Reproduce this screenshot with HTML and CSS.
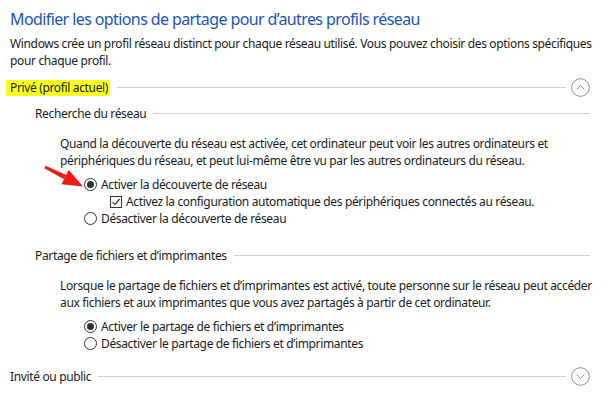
FILE: index.html
```html
<!DOCTYPE html>
<html lang="fr">
<head>
  <meta charset="UTF-8">
  <title>Paramètres de partage avancés</title>
  <link rel="stylesheet" href="styles.css">
</head>
<body>
  <h1 class="page-title">Modifier les options de partage pour d’autres profils réseau</h1>
  <p class="intro">Windows crée un profil réseau distinct pour chaque réseau utilisé. Vous pouvez choisir des options spécifiques pour chaque profil.</p>

  <section class="profile">
    <div class="profile-head">
      <span class="profile-name marked">Privé (profil actuel)</span>
      <span class="rule"></span>
      <svg class="toggle" viewBox="0 0 19 19"><circle cx="9.5" cy="9.5" r="8.8"/><path d="M5.8 11.2 9.5 7.6 13.2 11.2"/></svg>
    </div>

    <div class="group">
      <div class="group-head"><span>Recherche du réseau</span><span class="rule"></span></div>
      <p class="group-text">Quand la découverte du réseau est activée, cet ordinateur peut voir les autres ordinateurs et périphériques du réseau, et peut lui-même être vu par les autres ordinateurs du réseau.</p>
      <div class="options">
        <label class="option"><span class="radio on"></span>Activer la découverte de réseau</label>
        <label class="option sub"><span class="check"><svg viewBox="0 0 10 10"><path d="M1.6 5.2 4 7.6 8.6 2"/></svg></span>Activez la configuration automatique des périphériques connectés au réseau.</label>
        <label class="option"><span class="radio"></span>Désactiver la découverte de réseau</label>
      </div>
    </div>

    <div class="group">
      <div class="group-head"><span>Partage de fichiers et d’imprimantes</span><span class="rule"></span></div>
      <p class="group-text">Lorsque le partage de fichiers et d’imprimantes est activé, toute personne sur le réseau peut accéder aux fichiers et aux imprimantes que vous avez partagés à partir de cet ordinateur.</p>
      <div class="options">
        <label class="option"><span class="radio on"></span>Activer le partage de fichiers et d’imprimantes</label>
        <label class="option"><span class="radio"></span>Désactiver le partage de fichiers et d’imprimantes</label>
      </div>
    </div>
  </section>

  <section class="profile">
    <div class="profile-head">
      <span class="profile-name">Invité ou public</span>
      <span class="rule"></span>
      <svg class="toggle" viewBox="0 0 19 19"><circle cx="9.5" cy="9.5" r="8.8"/><path d="M5.8 7.8 9.5 11.4 13.2 7.8"/></svg>
    </div>
  </section>

  <!-- annotation -->
  <svg class="pointer" viewBox="40 160 50 32">
    <polygon points="45.7,165.7 44.3,168.3 64,179.3 66.2,174.9"/>
    <polygon points="83,186.5 61.5,184.3 68.7,169.9"/>
  </svg>
</body>
</html>
```

FILE: styles.css
```css
body {
  margin: 0;
  padding: 8px 13px 0 10px;
  position: relative;
  font-family: "Segoe UI", "Noto Sans", sans-serif;
  font-size: 12px;
  line-height: 17px;
  letter-spacing: -0.35px;
  color: #1a1a1a;
  background: #fff;
}
.page-title {
  margin: 0;
  font-size: 16px;
  font-weight: normal;
  line-height: 22px;
  letter-spacing: -0.6px;
  color: #1c54b4;
}
.intro {
  margin: 5px -6px 0 0;
}
.profile-head {
  display: flex;
  align-items: center;
  height: 19px;
  margin-top: 9px;
}
.profile-name.marked {
  background: #f8ff1c;
  margin-left: -4px;
  padding: 0 2px 0 4px;
  line-height: 16px;
}
.rule {
  flex: 1;
  height: 1px;
  margin-left: 7px;
  background: #cfcfcf;
}
.toggle {
  width: 19px;
  height: 19px;
  margin-left: 5px;
  fill: none;
  stroke: #8c8c8c;
  stroke-width: 1;
}
.group {
  padding-left: 25px;
}
.group-head {
  display: flex;
  align-items: center;
  margin-top: 8px;
}
.group + .group .group-head {
  margin-top: 20px;
}
.group-text {
  margin: 13px -6px 0 25px;
}
.options {
  margin: 7px 0 0 49px;
}
.option {
  display: flex;
  align-items: center;
  height: 17px;
}
.option.sub {
  margin-left: 26px;
}
.radio {
  width: 13px;
  height: 13px;
  box-sizing: border-box;
  margin-right: 4px;
  border: 1px solid #333;
  border-radius: 50%;
  display: flex;
  align-items: center;
  justify-content: center;
}
.radio.on::after {
  content: "";
  width: 7px;
  height: 7px;
  border-radius: 50%;
  background: #333;
}
.check {
  width: 12px;
  height: 12px;
  box-sizing: border-box;
  margin-right: 4px;
  border: 1px solid #333;
  display: flex;
}
.check svg {
  width: 10px;
  height: 10px;
  fill: none;
  stroke: #333;
  stroke-width: 1.2;
}
.profile + .profile .profile-head {
  margin-top: 15px;
}
.pointer {
  position: absolute;
  left: 40px;
  top: 160px;
  width: 50px;
  height: 32px;
  fill: #ec1a1a;
}
```
